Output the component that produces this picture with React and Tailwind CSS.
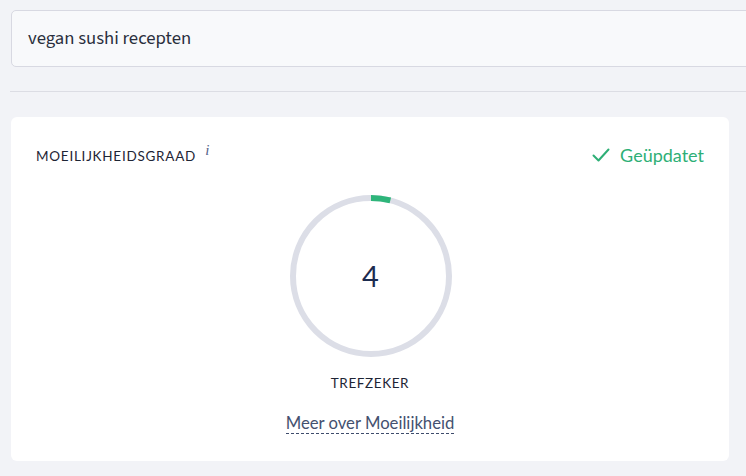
import React from "react";

export default function App() {
  const r = 78;
  const c = 2 * Math.PI * r;
  const pct = 0.04;
  return (
    <div className="w-[746px] h-[476px] overflow-hidden bg-[#f2f3f7] pl-[11px] pt-[10px]" style={{ fontFamily: "Lato, 'Noto Sans', sans-serif" }}>
      <div className="w-[760px] h-[57px] rounded-[5px] border-[1.5px] border-[#d8d9e2] bg-[#f8f9fb] flex items-center pl-[16px]">
        <span className="text-[18.7px] text-[#2a2f3d]" style={{ fontFamily: "'Source Sans 3', 'Open Sans', sans-serif" }}>vegan sushi recepten</span>
      </div>
      <div className="mt-[24px] mr-[-11px] -ml-[1px] border-t border-[#dcdde4]" />
      <div className="mt-[25px] w-[718px] h-[344px] bg-white rounded-[6px] px-[25px] pt-[27px] flex flex-col">
        <div className="flex items-start justify-between">
          <div className="flex items-start pt-[4px]">
            <span className="text-[13.5px] tracking-[0.75px] text-[#1e2535] leading-[16px]">MOEILIJKHEIDSGRAAD</span>
            <span className="ml-[9px] -mt-[9px] text-[15px] italic text-[#55658a]" style={{ fontFamily: "'Liberation Serif', serif" }}>i</span>
          </div>
          <div className="flex items-center gap-[10px] text-[18px] text-[#2eaf76] leading-[22px] pr-[0px]">
            <svg width="18" height="14" viewBox="0 0 18 14" fill="none">
              <path d="M1.5 7.5 L6.5 12.5 L16.5 1.5" stroke="#2eaf76" strokeWidth="2" strokeLinecap="round" strokeLinejoin="round" />
            </svg>
            <span>Geüpdatet</span>
          </div>
        </div>
        <div className="flex flex-col items-center mt-[29px]">
          <div className="relative w-[162px] h-[162px] ml-[1px]">
            <svg width="162" height="162" viewBox="0 0 162 162">
              <circle cx="81" cy="81" r={r} fill="none" stroke="#dcdee7" strokeWidth="6" />
              <circle cx="81" cy="81" r={r} fill="none" stroke="#2eb57a" strokeWidth="6" strokeDasharray={`${c * pct} ${c}`} transform="rotate(-90 81 81)" />
            </svg>
            <div className="absolute inset-0 flex items-center justify-center text-[29px] text-[#1c2b4f]">4</div>
          </div>
          <div className="mt-[18px] text-[13.5px] tracking-[0.6px] text-[#1e2535] leading-[16px]">TREFZEKER</div>
          <div className="mt-[22px] text-[16.7px] text-[#44516f] leading-[20px] border-b border-dashed border-[#3e4c6c]">Meer over Moeilijkheid</div>
        </div>
      </div>
    </div>
  );
}
